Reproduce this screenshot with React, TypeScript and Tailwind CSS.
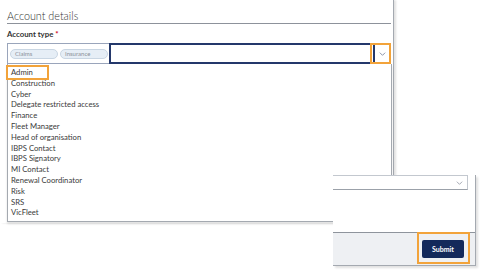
const roles = [
  "Admin",
  "Construction",
  "Cyber",
  "Delegate restricted access",
  "Finance",
  "Fleet Manager",
  "Head of organisation",
  "IBPS Contact",
  "IBPS Signatory",
  "MI Contact",
  "Renewal Coordinator",
  "Risk",
  "SRS",
  "VicFleet",
];

function Chevron({ className }: { className?: string }) {
  return (
    <svg viewBox="0 0 10 6" className={className} fill="none" stroke="currentColor" strokeWidth="1">
      <path d="M1 1l4 4 4-4" />
    </svg>
  );
}

function Chip({ label }: { label: string }) {
  return (
    <span className="flex h-[10px] w-[48px] items-center rounded-full border border-[#c9d6e3] bg-[#e6eef6] pl-[4px] text-[6px] leading-none text-[#8b9098]">
      {label}
    </span>
  );
}

export default function App() {
  return (
    <div className="relative h-[277px] w-[480px] overflow-hidden bg-white font-['Lato',sans-serif] text-[#333]">
      {/* main form panel */}
      <div className="w-[394px] border-r border-[#a4a9b0] pb-[1px] shadow-[2px_0_2px_rgba(0,0,0,0.12)]">
        <div className="ml-[7px] mr-[2px] border-b border-[#8d929b] pt-[8px]">
          <h2 className="text-[10.8px] font-light leading-[15px] text-[#333]">Account details</h2>
        </div>

        <div className="mt-[5px] ml-[7px] text-[7.8px] font-bold leading-[10px] text-[#333]">
          Account type <span className="text-[#d0021b]">*</span>
        </div>

        <div className="mt-[4px] ml-[7px] mr-[2px] flex h-[21px]">
          <div className="flex w-[102px] items-center gap-[2px] border border-r-0 border-[#9aa5bb] pl-[2px]">
            <Chip label="Claims" />
            <Chip label="Insurance" />
          </div>
          <div className="flex-1 border-2 border-[#24386b]" />
          <div className="relative flex w-[16px] items-center justify-center border border-l-0 border-[#b9bfc9]">
            <Chevron className="h-[4px] w-[7px] text-[#556080]" />
            <span className="absolute -top-[1px] -bottom-[1px] -left-[5px] -right-[1px] border-2 border-[#f2a33a]" />
          </div>
        </div>

        <div className="relative ml-[7px] mr-[1px] border-x border-b border-[#a4a9b0] pt-[3px] pb-[3px] pl-[3px] shadow-[0_2px_2px_rgba(0,0,0,0.12)]">
          {roles.map((r) => (
            <div key={r} className="text-[7.7px] leading-[10.8px] text-[#3a3a3a]">
              {r}
            </div>
          ))}
          <span className="absolute left-[-2px] top-[1px] h-[15px] w-[43px] border-2 border-[#f2a33a]" />
        </div>
      </div>

      {/* cropped footer of another view */}
      <div className="absolute left-[333px] top-[175px] flex h-[91px] w-[143px] flex-col border-r border-b border-[#a4a9b0] bg-white shadow-[2px_2px_2px_rgba(0,0,0,0.12)]">
        <div className="mr-[7px] flex h-[15px] items-center justify-end border border-l-0 border-[#c3c8cf] border-b-[#9ba1a9] pr-[4px]">
          <Chevron className="h-[4px] w-[7px] text-[#7a8090]" />
        </div>
        <div className="flex-1" />
        <div className="flex h-[33px] items-center justify-end border-t border-[#8e949c] bg-[#eef0f3] pr-[11px]">
          <div className="relative">
            <button className="flex h-[18px] w-[42px] items-center justify-center rounded-[2px] bg-[#13295b] text-[7px] font-bold text-white">
              Submit
            </button>
            <span className="absolute -left-[5px] -top-[8px] h-[32px] w-[53px] border-2 border-[#f2a33a]" />
          </div>
        </div>
      </div>
    </div>
  );
}
